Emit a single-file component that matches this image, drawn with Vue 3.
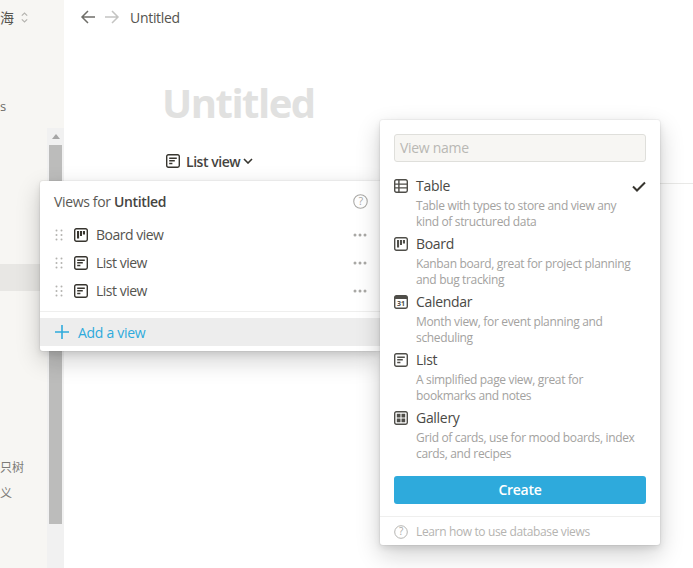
<script setup>
const frame = 'M2.4 0.7h9.2a1.7 1.7 0 0 1 1.7 1.7v9.2a1.7 1.7 0 0 1-1.7 1.7h-9.2a1.7 1.7 0 0 1-1.7-1.7v-9.2a1.7 1.7 0 0 1 1.7-1.7z'
const glyphs = {
  board: 'M3 3h2.1v7.4h-2.1zM6 3h2v5h-2zM8.9 3h2.1v3.6h-2.1z',
  list: 'M3.2 3.4h7.6v1.5h-7.6zM3.2 6.1h5.6v1.5h-5.6zM3.2 8.8h3.2v1.4h-3.2z',
  table: 'M1 4.4h12v1.4h-12zM1 8.2h12v1.4h-12zM4.2 1h1.4v12h-1.4z',
  calendar: 'M1 1h12v3h-12z',
  gallery: 'M2.8 2.8h3.7v3.7h-3.7zM7.5 2.8h3.7v3.7h-3.7zM2.8 7.5h3.7v3.7h-3.7zM7.5 7.5h3.7v3.7h-3.7z'
}
const views = [
  { id: 1, icon: 'board', name: 'Board view' },
  { id: 2, icon: 'list', name: 'List view' },
  { id: 3, icon: 'list', name: 'List view' }
]
const types = [
  { icon: 'table', name: 'Table', desc: 'Table with types to store and view any kind of structured data', on: true },
  { icon: 'board', name: 'Board', desc: 'Kanban board, great for project planning and bug tracking' },
  { icon: 'calendar', name: 'Calendar', desc: 'Month view, for event planning and scheduling' },
  { icon: 'list', name: 'List', desc: 'A simplified page view, great for bookmarks and notes' },
  { icon: 'gallery', name: 'Gallery', desc: 'Grid of cards, use for mood boards, index cards, and recipes' }
]
</script>

<template>
  <div class="page">
    <aside class="side">
      <div class="side-content">
        <div class="workspace"><span>海</span>
          <svg class="updown" viewBox="0 0 10 14" width="9" height="13"><path d="M2 5l3-3 3 3M2 9l3 3 3-3" fill="none" stroke="#b5b4b0" stroke-width="1.3"/></svg>
        </div>
        <div class="side-s">s</div>
        <div class="side-active"></div>
        <div class="side-zh1">只树</div>
        <div class="side-zh2">义</div>
      </div>
      <div class="track">
        <div class="arrow"></div>
        <div class="thumb"></div>
      </div>
    </aside>

    <main class="main">
      <header class="topbar">
        <svg viewBox="0 0 16 14" width="16" height="14"><path d="M15 7H2M8 1L2 7l6 6" fill="none" stroke="#6f6e69" stroke-width="1.5"/></svg>
        <svg viewBox="0 0 16 14" width="16" height="14"><path d="M1 7h13M8 1l6 6-6 6" fill="none" stroke="#c4c4c2" stroke-width="1.5"/></svg>
        <span class="crumb">Untitled</span>
      </header>
      <h1 class="title">Untitled</h1>
      <div class="tabs">
        <svg class="ico" viewBox="0 0 14 14"><path :d="frame" fill="none" stroke="#37352f" stroke-width="1.4"/><path :d="glyphs.list" fill="#37352f"/></svg>
        <span class="tab-label">List view</span>
        <svg class="chev" viewBox="0 0 10 6" width="10" height="6"><path d="M1 1l4 4 4-4" fill="none" stroke="#37352f" stroke-width="1.6"/></svg>
      </div>
      <div class="tab-line"></div>
    </main>

    <section class="pop views-pop">
      <div class="views-head">
        <span>Views for <b>Untitled</b></span>
        <svg class="help" viewBox="0 0 14 14"><circle cx="7" cy="7" r="6.3" fill="none" stroke="#aaa9a6" stroke-width="1"/><text x="7" y="10.4" text-anchor="middle" class="help-q">?</text></svg>
      </div>
      <div v-for="v in views" :key="v.id" class="view-row">
        <svg class="grip" viewBox="0 0 8 12" width="8" height="12"><g fill="#b3b2af"><circle cx="1.5" cy="1.5" r="1"/><circle cx="6.5" cy="1.5" r="1"/><circle cx="1.5" cy="6" r="1"/><circle cx="6.5" cy="6" r="1"/><circle cx="1.5" cy="10.5" r="1"/><circle cx="6.5" cy="10.5" r="1"/></g></svg>
        <svg class="ico" viewBox="0 0 14 14"><path :d="frame" fill="none" stroke="#37352f" stroke-width="1.4"/><path :d="glyphs[v.icon]" fill="#37352f"/></svg>
        <span class="view-name">{{ v.name }}</span>
        <svg class="dots" viewBox="0 0 14 4" width="14" height="4"><g fill="#a9a8a5"><circle cx="2" cy="2" r="1.5"/><circle cx="7" cy="2" r="1.5"/><circle cx="12" cy="2" r="1.5"/></g></svg>
      </div>
      <div class="views-sep"></div>
      <div class="add-row">
        <svg viewBox="0 0 14 14" width="14" height="14"><path d="M7 0v14M0 7h14" stroke="#2eaadc" stroke-width="1.6"/></svg>
        <span>Add a view</span>
      </div>
    </section>

    <section class="pop create-pop">
      <div class="name-input">View name</div>
      <ul class="type-list">
        <li v-for="t in types" :key="t.name" class="type">
          <svg class="ico type-ico" viewBox="0 0 14 14">
            <path :d="frame" fill="none" stroke="#4f4e49" stroke-width="1.4"/>
            <path :d="glyphs[t.icon]" fill="#4f4e49"/>
            <text v-if="t.icon === 'calendar'" x="7" y="11" text-anchor="middle" class="cal-num">31</text>
          </svg>
          <div class="type-text">
            <div class="type-name">{{ t.name }}</div>
            <div class="type-desc">{{ t.desc }}</div>
          </div>
          <svg v-if="t.on" class="check" viewBox="0 0 14 11" width="14" height="11"><path d="M1 5.5l4 4 8-8" fill="none" stroke="#37352f" stroke-width="2"/></svg>
        </li>
      </ul>
      <div class="create-btn">Create</div>
      <div class="learn">
        <svg class="help small" viewBox="0 0 14 14"><circle cx="7" cy="7" r="6.3" fill="none" stroke="#b5b4b1" stroke-width="1"/><text x="7" y="10.4" text-anchor="middle" class="help-q">?</text></svg>
        <span>Learn how to use database views</span>
      </div>
    </section>
  </div>
</template>

<style scoped>
.page {
  position: relative;
  display: flex;
  width: 693px;
  height: 568px;
  overflow: hidden;
  background: #fff;
  font-family: "Open Sans", "Noto Sans CJK SC", sans-serif;
  color: #37352f;
}
.side {
  display: flex;
  flex: 0 0 64px;
  background: #f7f6f3;
}
.side-content {
  position: relative;
  width: 47px;
  overflow: hidden;
  font-size: 14px;
  color: #6b6a66;
}
.workspace {
  position: absolute;
  top: 7px;
  left: 0;
  display: flex;
  align-items: center;
  gap: 6px;
  color: #55544f;
  white-space: nowrap;
}
.side-s { position: absolute; top: 97px; left: 0; font-size: 13px; color: #6b6a66; }
.side-active { position: absolute; top: 264px; left: 0; right: 0; height: 27px; background: #e8e7e4; }
.side-zh1 { position: absolute; top: 458px; left: 0; font-size: 12px; white-space: nowrap; color: #7d7c78; }
.side-zh2 { position: absolute; top: 484px; left: 0; font-size: 12px; white-space: nowrap; color: #7d7c78; }
.track {
  display: flex;
  flex-direction: column;
  align-items: center;
  width: 17px;
  margin-top: 128px;
  background: #f1f1f1;
}
.arrow {
  margin: 6px 0 6px;
  border-left: 4px solid transparent;
  border-right: 4px solid transparent;
  border-bottom: 5px solid #a6a6a6;
}
.thumb { width: 13px; height: 379px; background: #bcbcbb; }

.main { flex: 1; min-width: 0; }
.topbar {
  display: flex;
  align-items: center;
  gap: 8px;
  height: 34px;
  padding-left: 16px;
}
.crumb { margin-left: 2px; font-size: 14px; color: #55544f; letter-spacing: -0.3px; }
.title {
  margin: 46px 0 0 98px;
  font-size: 40px;
  line-height: 46px;
  font-weight: 700;
  color: #e1e1e0;
  letter-spacing: -1.5px;
}
.tabs {
  display: flex;
  align-items: center;
  gap: 6px;
  height: 28px;
  margin: 21px 0 0 102px;
}
.tab-label { font-size: 14px; font-weight: 600; color: #45443f; letter-spacing: -0.45px; }
.chev { margin-left: -3px; }
.tab-line { height: 1px; margin-left: 99px; background: #e9e9e7; margin-top: 8px; }
.ico { width: 14px; height: 14px; flex: none; }

.pop {
  position: absolute;
  background: #fff;
  box-shadow: 0 0 0 1px rgba(15, 15, 15, 0.04), 0 3px 6px rgba(15, 15, 15, 0.1), 0 9px 24px rgba(15, 15, 15, 0.2);
}
.views-pop {
  left: 40px;
  top: 181px;
  width: 340px;
  height: 170px;
  border-radius: 3px 0 0 3px;
}
.views-head {
  display: flex;
  align-items: center;
  justify-content: space-between;
  height: 40px;
  padding: 0 12px 0 14px;
  font-size: 14px;
  color: #5a5955;
  letter-spacing: -0.35px;
}
.views-head b { font-weight: 600; color: #45443f; }
.help { width: 15px; height: 15px; flex: none; }
.help.small { width: 14px; height: 14px; }
.help-q { font-size: 10px; fill: #aaa9a6; font-family: "Open Sans", sans-serif; }
.view-row {
  display: flex;
  align-items: center;
  height: 28px;
  padding: 0 13px 0 15px;
}
.view-name { margin: 0 0 2px 8px; font-size: 14px; color: #55544f; letter-spacing: -0.5px; }
.grip { margin-right: 11px; }
.dots { margin-left: auto; }
.views-sep { height: 1px; margin-top: 6px; background: #efefee; }
.add-row {
  display: flex;
  align-items: center;
  gap: 9px;
  height: 28px;
  margin-top: 6px;
  padding-left: 15px;
  background: #ededed;
  color: #2eaadc;
  font-size: 14px;
  letter-spacing: -0.3px;
}

.create-pop {
  left: 380px;
  top: 120px;
  width: 280px;
  height: 425px;
  border-radius: 3px;
  padding: 14px 14px 0;
  box-sizing: border-box;
}
.name-input {
  box-sizing: border-box;
  height: 28px;
  padding: 0 5px;
  line-height: 26px;
  border: 1px solid #dfdfdb;
  border-radius: 3px;
  background: #f7f6f3;
  font-size: 14px;
  color: #b9b8b4;
  letter-spacing: -0.3px;
}
.type-list { margin: 14px 0 0; padding: 0; list-style: none; }
.type {
  position: relative;
  display: flex;
  gap: 8px;
  height: 58px;
}
.type-ico { margin-top: 3px; flex: none; }
.type-text { width: 221px; }
.type-name { font-size: 14px; line-height: 20px; color: #4a4945; letter-spacing: -0.3px; }
.type-desc { margin-top: 2px; font-size: 12px; line-height: 16px; color: #a3a2a0; letter-spacing: -0.34px; }
.check { position: absolute; right: 0; top: 5px; }
.cal-num { font-size: 7px; font-weight: 700; fill: #4f4e49; font-family: "Open Sans", sans-serif; }
.create-btn {
  height: 28px;
  margin-top: 10px;
  border-radius: 3px;
  background: #2eaadc;
  color: #fff;
  font-size: 14px;
  font-weight: 600;
  line-height: 28px;
  text-align: center;
  letter-spacing: -0.3px;
}
.learn {
  display: flex;
  align-items: center;
  gap: 8px;
  height: 29px;
  margin: 12px -14px 0;
  padding-left: 14px;
  border-top: 1px solid #efefee;
  font-size: 12px;
  color: #b5b4b1;
  letter-spacing: -0.36px;
}
</style>
